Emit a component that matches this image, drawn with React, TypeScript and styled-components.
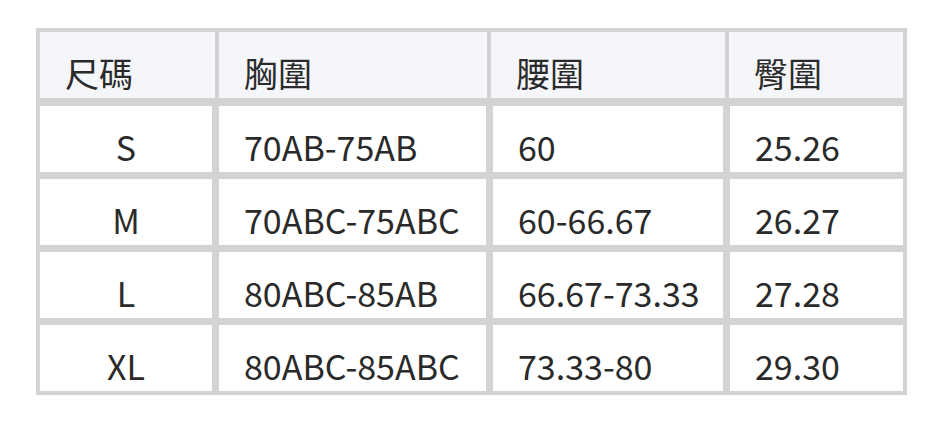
import React from "react";
import styled, { createGlobalStyle } from "styled-components";

const GlobalStyle = createGlobalStyle`
	body {
		margin: 0;
		background: #ffffff;
		font-family: "Noto Sans CJK TC", "Noto Sans", sans-serif;
		color: #2a2a2a;
	}
`;

// 전체 영역
const Page = styled.div`
	padding: 28px 0 0 36px;
`;

// 표 테두리
const Table = styled.div`
	width: 871px;
	box-sizing: border-box;
	padding: 4px;
	background-color: #d3d3d3;
`;

const HeadRow = styled.div`
	display: grid;
	grid-template-columns: 175px 268px 234px 174px;
	column-gap: 4px;
`;

const Body = styled.div`
	display: grid;
	grid-template-columns: 172px 267px 230px 173px;
	gap: 7px;
	margin-top: 8px;
`;

const Cell = styled.div<{ $head?: boolean; $center?: boolean }>`
	height: 66px;
	box-sizing: border-box;
	display: flex;
	align-items: flex-end;
	justify-content: ${(props) => (props.$center ? "center" : "flex-start")};
	padding: 0 25px 8px;
	background-color: ${(props) => (props.$head ? "#f5f6fa" : "#ffffff")};
	font-size: 34px;
	font-weight: 400;
	line-height: 34px;
	white-space: nowrap;
`;

const headers = ["尺碼", "胸圍", "腰圍", "臀圍"];

const rows = [
	["S", "70AB-75AB", "60", "25.26"],
	["M", "70ABC-75ABC", "60-66.67", "26.27"],
	["L", "80ABC-85AB", "66.67-73.33", "27.28"],
	["XL", "80ABC-85ABC", "73.33-80", "29.30"],
];

const App = () => {
	return (
		<Page>
			<GlobalStyle />
			<Table>
				<HeadRow>
					{headers.map((h) => (
						<Cell key={h} $head>
							{h}
						</Cell>
					))}
				</HeadRow>
				<Body>
					{rows.map((row) =>
						row.map((value, i) => (
							<Cell key={row[0] + i} $center={i === 0}>
								{value}
							</Cell>
						))
					)}
				</Body>
			</Table>
		</Page>
	);
};

export default App;
